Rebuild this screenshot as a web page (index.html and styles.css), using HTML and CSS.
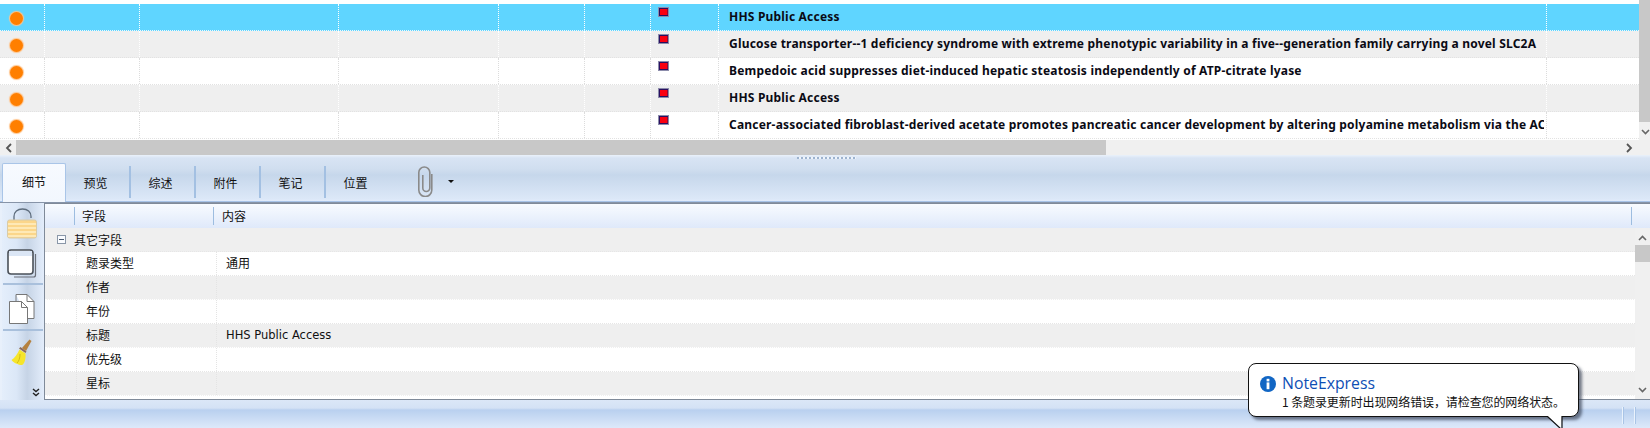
FILE: index.html
```html
<!DOCTYPE html>
<html lang="zh">
<head>
<meta charset="utf-8">
<title>NoteExpress</title>
<link rel="stylesheet" href="styles.css">
</head>
<body>
<svg class="defs" width="0" height="0">
  <defs>
    <symbol id="flag" viewBox="0 0 11 10">
      <rect x="0" y="0" width="11" height="10" fill="#8c8cab"/>
      <rect x="1" y="1" width="9" height="8" fill="#2a1060"/>
      <rect x="2" y="2" width="7.500" height="6" fill="#fa0010"/>
    </symbol>
  </defs>
</svg>
<div class="top">
  <div class="list">
    <div class="row selected"><div class="cell"><span class="dot"></span></div><div class="cell"></div><div class="cell"></div><div class="cell"></div><div class="cell"></div><div class="cell"></div><div class="cell"><svg class="flag"><use href="#flag"/></svg></div><div class="cell title"><div class="ttext">HHS Public Access</div></div><div class="cell"></div></div>
    <div class="row gray"><div class="cell"><span class="dot"></span></div><div class="cell"></div><div class="cell"></div><div class="cell"></div><div class="cell"></div><div class="cell"></div><div class="cell"><svg class="flag"><use href="#flag"/></svg></div><div class="cell title"><div class="ttext">Glucose transporter--1 deficiency syndrome with extreme phenotypic variability in a five--generation family carrying a novel SLC2A</div></div><div class="cell"></div></div>
    <div class="row"><div class="cell"><span class="dot"></span></div><div class="cell"></div><div class="cell"></div><div class="cell"></div><div class="cell"></div><div class="cell"></div><div class="cell"><svg class="flag"><use href="#flag"/></svg></div><div class="cell title"><div class="ttext">Bempedoic acid suppresses diet-induced hepatic steatosis independently of ATP-citrate lyase</div></div><div class="cell"></div></div>
    <div class="row gray"><div class="cell"><span class="dot"></span></div><div class="cell"></div><div class="cell"></div><div class="cell"></div><div class="cell"></div><div class="cell"></div><div class="cell"><svg class="flag"><use href="#flag"/></svg></div><div class="cell title"><div class="ttext">HHS Public Access</div></div><div class="cell"></div></div>
    <div class="row"><div class="cell"><span class="dot"></span></div><div class="cell"></div><div class="cell"></div><div class="cell"></div><div class="cell"></div><div class="cell"></div><div class="cell"><svg class="flag"><use href="#flag"/></svg></div><div class="cell title"><div class="ttext">Cancer-associated fibroblast-derived acetate promotes pancreatic cancer development by altering polyamine metabolism via the AC</div></div><div class="cell"></div></div>
  </div>
  <div class="vscroll">
    <div class="vthumb"></div>
    <div class="vtrack"><svg class="chev" width="9" height="6" viewBox="0 0 9 6"><path d="M1 1l3.500 3.500L8 1" fill="none" stroke="#666" stroke-width="1.600"/></svg></div>
  </div>
</div>
<div class="hscroll">
  <div class="harrow"><svg width="7" height="10" viewBox="0 0 7 10"><path d="M6 1L2 5l4 4" fill="none" stroke="#555" stroke-width="1.800"/></svg></div>
  <div class="hthumb"></div>
  <div class="htrack"><svg width="7" height="10" viewBox="0 0 7 10"><path d="M1 1l4 4-4 4" fill="none" stroke="#555" stroke-width="1.800"/></svg></div>
</div>
<div class="tabstrip">
  <div class="grip"></div>
  <div class="tabs">
    <div class="tab active">细节</div>
    <div class="tab">预览</div>
    <div class="tab">综述</div>
    <div class="tab">附件</div>
    <div class="tab">笔记</div>
    <div class="tab last">位置</div>
    <div class="clip">
      <svg width="16" height="31" viewBox="0 0 16 31"><path d="M14.800 8v16a6.500 6.500 0 0 1-13 0V6.500a5.500 5.500 0 0 1 11 0V22a3.500 3.500 0 0 1-7 0V9" fill="none" stroke="#8a8a8a" stroke-width="1.600"/></svg>
      <span class="caret"></span>
    </div>
  </div>
</div>
<div class="main">
  <div class="side">
    <svg class="lock" width="30" height="31" viewBox="0 0 30 31">
      <path d="M7 12V8.500C7 4 10.500 1 15.500 1S24 4 24 8.500V10" fill="none" stroke="#5d6c7c" stroke-width="1.300"/>
      <rect x="0.500" y="12" width="29" height="18" rx="2" fill="#fbd68a" stroke="#d8cba8"/>
      <path d="M1 16h28M1 20h28M1 24h28M1 28h28" stroke="#fee9b6" stroke-width="2"/>
    </svg>
    <svg class="win" width="30" height="29" viewBox="0 0 30 29">
      <path d="M28.500 5v21c0 1-.5 2-2 2H7" fill="none" stroke="#6a6f78" stroke-width="1.200"/>
      <rect x="1" y="1" width="25" height="24" rx="3" fill="#fff" stroke="#4a5058" stroke-width="1.600"/>
      <rect x="2" y="2" width="23" height="5" fill="#dbe6f5"/>
    </svg>
    <div class="sep"></div>
    <svg class="pages" width="27" height="30" viewBox="0 0 27 30">
      <path d="M7 .5h11l7 7v17h-6" fill="#fff" stroke="#777"/>
      <path d="M18 .5v7h7" fill="none" stroke="#777"/>
      <path d="M7 .5v7" fill="none" stroke="#777"/>
      <path d="M.5 7.500h12l6 6v16H.5z" fill="#fff" stroke="#777"/>
      <path d="M12.500 7.500v6h6" fill="none" stroke="#777"/>
    </svg>
    <div class="sep"></div>
    <svg class="broom" width="21" height="27" viewBox="0 0 21 27">
      <path d="M18.500 .5l2 1.500L15 12l-4-3z" fill="#b5813f"/>
      <path d="M9.500 8l6 4.500-1 1.500-6.500-4.500z" fill="#8e6a5a"/>
      <path d="M8.500 10.500l6 4c.5 4-.5 9-2.500 11-2 1-4 .5-5.500-.5-2-.5-5-2.500-6-4 3-2 6-6 8-10.500z" fill="#f6e52a"/>
      <path d="M9 15c0 4-1 7-3 9" fill="none" stroke="#d2bc14" stroke-width="1"/>
    </svg>
    <svg class="more" width="8" height="9" viewBox="0 0 8 9"><path d="M1 1l3 2.500L7 1M1 5l3 2.500L7 5" fill="none" stroke="#222" stroke-width="1.400"/></svg>
  </div>
  <div class="panel">
    <div class="head">
      <div class="hcell first"></div>
      <div class="hcell second">字段</div>
      <div class="hcell third">内容</div>
    </div>
    <div class="body">
      <div class="rows">
        <div class="frow gray group"><span class="minus"></span>其它字段</div>
        <div class="frow"><div class="fgut"></div><div class="fname">题录类型</div><div class="fval">通用</div></div>
        <div class="frow gray"><div class="fgut"></div><div class="fname">作者</div><div class="fval"></div></div>
        <div class="frow"><div class="fgut"></div><div class="fname">年份</div><div class="fval"></div></div>
        <div class="frow gray"><div class="fgut"></div><div class="fname">标题</div><div class="fval latin">HHS Public Access</div></div>
        <div class="frow"><div class="fgut"></div><div class="fname">优先级</div><div class="fval"></div></div>
        <div class="frow gray"><div class="fgut"></div><div class="fname">星标</div><div class="fval"></div></div>
      </div>
      <div class="pscroll">
        <svg width="9" height="6" viewBox="0 0 9 6"><path d="M1 5l3.500-3.500L8 5" fill="none" stroke="#666" stroke-width="1.600"/></svg>
        <div class="pthumb"></div>
        <svg class="pdown" width="9" height="6" viewBox="0 0 9 6"><path d="M1 1l3.500 3.500L8 1" fill="none" stroke="#666" stroke-width="1.600"/></svg>
      </div>
    </div>
  </div>
</div>
<div class="status">
  <span class="grip2"></span><span class="grip2"></span>
</div>
<div class="balloon">
  <div class="btitle">
    <svg width="16" height="16" viewBox="0 0 16 16"><circle cx="8" cy="8" r="8" fill="#1166c4"/><rect x="6.600" y="2.800" width="2.800" height="2.600" fill="#fff"/><rect x="6.600" y="6.400" width="2.800" height="6.800" fill="#fff"/></svg>
    <span>NoteExpress</span>
  </div>
  <div class="bmsg">1 条题录更新时出现网络错误，请检查您的网络状态。</div>
  <svg class="tail" width="20" height="13" viewBox="0 0 20 13"><path d="M2 0L16 12 17 0" fill="#fff"/><path d="M2 0l14 13M17 0v13" fill="none" stroke="#111" stroke-width="1.200"/></svg>
</div>
</body>
</html>
```
FILE: styles.css
```css
* { box-sizing: border-box; }
html, body { margin: 0; padding: 0; }
body {
  width: 1650px;
  height: 428px;
  overflow: hidden;
  position: relative;
  background: #fff;
  font-family: "Noto Sans CJK SC", "Liberation Sans", sans-serif;
  font-size: 12px;
  color: #111;
  display: flex;
  flex-direction: column;
}
.defs { position: absolute; }

/* upper list */
.top { height: 140px; display: flex; flex: none; }
.list { width: 1639px; padding-top: 4px; }
.row {
  height: 27px;
  display: grid;
  grid-template-columns: 45px 95px 199px 160px 86px 66px 68px 828px 92px;
  border-bottom: 1px dotted #e2e2e2;
}
.row.gray { background: #efefef; }
.row.selected { background: #5fd5ff; border-bottom-color: #e8f8ff; }
.cell { border-right: 1px dotted #dcdcdc; position: relative; min-width: 0; }
.row.gray .cell { border-right-color: #fff; }
.row.selected .cell { border-right-color: #fff; }
.cell:last-child { border-right: 0; }
.dot {
  display: block;
  width: 13px;
  height: 13px;
  margin: 8px 0 0 10px;
  border-radius: 50%;
  background: #ff7f00;
  box-shadow: 0 0 1px 1px #ffc38a;
}
.flag { display: block; width: 11px; height: 10px; margin: 3px 0 0 7px; }
.title {
  padding: 0 2px 0 10px;
  font-family: "Noto Sans", sans-serif;
  font-weight: 700;
  font-size: 12px;
  letter-spacing: .2px;
  line-height: 25px;
  color: #0a0a14;
}
.ttext { white-space: nowrap; overflow: hidden; }
.vscroll { width: 11px; display: flex; flex-direction: column; }
.vthumb { height: 122px; background: #c8c8c8; }
.vtrack { flex: 1; background: #f0f0f0; padding: 7px 0 0 2px; }
.chev { display: block; }

.hscroll { height: 15px; flex: none; display: flex; background: #f0f0f0; }
.harrow { width: 16px; display: flex; align-items: center; justify-content: center; }
.hthumb { width: 1090px; background: #c8c8c8; }
.htrack { flex: 1; display: flex; align-items: center; justify-content: flex-end; padding-right: 17px; }

/* tab strip */
.tabstrip {
  height: 48px;
  flex: none;
  position: relative;
  background: linear-gradient(#eaf1fa 0, #d8e4f4 3px, #d0deef 14px, #c6d7eb 20px, #dce8f8 44px, #e2ecfb 46px, #a8c4e8 46px, #a8c4e8 47px, #8794a8 47px);
}
.grip {
  position: absolute;
  left: 797px;
  top: 2px;
  width: 59px;
  height: 2px;
  background: repeating-linear-gradient(90deg, #9db3cf 0 2px, #eef4fb 2px 4px);
}
.tabs { display: flex; padding: 8px 0 0 2px; height: 47px; }
.tab {
  width: 65px;
  height: 32px;
  margin-top: 3px;
  padding: 0 4px 0 0;
  border-right: 2px solid #a3c0e2;
  text-align: center;
  line-height: 34px;
  color: #111;
  flex: none;
}
.tab.last { border-right: 0; padding-right: 6px; }
.tab.active {
  width: 64px;
  height: 39px;
  margin-top: 0;
  padding: 0;
  line-height: 36px;
  background: linear-gradient(#f7faff, #f2f7fe);
  border: 1px solid #a9c5e8;
  border-bottom: 0;
  border-radius: 2px 2px 0 0;
}
.clip { display: flex; align-items: flex-start; margin-left: 26px; }
.clip svg { display: block; margin-top: 3px; }
.caret {
  width: 0;
  height: 0;
  margin: 17px 0 0 15px;
  border: 3px solid transparent;
  border-top: 3px solid #111;
  border-bottom: 0;
}

/* main */
.main { height: 197px; flex: none; display: flex; }
.side {
  width: 44px;
  flex: none;
  padding: 5px 0 0 2px;
  display: flex;
  flex-direction: column;
  position: relative;
  background: linear-gradient(90deg, #e4eefb 0, #dbe7f7 35%, #c6d4e6 60%, #e3edfb 100%);
  border-left: 2px solid #e8f0fb;
}
.side svg { display: block; flex: none; }
.lock { margin-left: 3px; }
.win { margin: 10px 0 0 3px; }
.sep { height: 2px; margin: 5px 0 0 -1px; width: 40px; background: #a9c0dc; flex: none; }
.pages { margin: 9px 0 0 5px; }
.sep + .broom { margin: 8px 0 0 7px; }
.more { position: absolute; left: 30px; top: 185px; }
.panel {
  flex: 1;
  min-width: 0;
  border: 1px solid #7f8a99;
  border-width: 1px 0 1px 1px;
  display: flex;
  flex-direction: column;
  background: #fff;
}
.head {
  height: 24px;
  flex: none;
  display: flex;
  padding-top: 3px;
  background: linear-gradient(#f8fbff, #dfe9fa);
  line-height: 21px;
}
.hcell { height: 18px; border-right: 1px solid #9dbde0; flex: none; line-height: 18px; }
.first { width: 30px; }
.second { width: 139px; padding-left: 7px; }
.third { flex: 1; padding-left: 8px; margin-right: 18px; }
.body { flex: 1; display: flex; min-height: 0; }
.rows { flex: 1; min-width: 0; overflow: hidden; }
.frow {
  height: 24px;
  display: flex;
  border-bottom: 1px dotted #e6e6e6;
  line-height: 22px;
}
.frow.gray { background: #efefef; border-bottom-color: #fff; }
.frow.group { align-items: center; padding-left: 12px; border-bottom-color: #e6e6e6; }
.minus {
  width: 9px;
  height: 9px;
  margin-right: 8px;
  margin-top: -1px;
  border: 1px solid #8a97a8;
  background: linear-gradient(90deg, transparent 1px, #4a5a70 1px, #4a5a70 6px, transparent 6px) center / 100% 1px no-repeat #fafcff;
}
.fgut { width: 32px; flex: none; border-right: 1px dotted #e4e4e4; }
.fname { width: 140px; flex: none; padding-left: 9px; border-right: 1px dotted #e4e4e4; }
.fval { flex: 1; padding-left: 9px; }
.latin { font-family: "DejaVu Sans", sans-serif; font-size: 11.500px; }
.pscroll {
  width: 15px;
  flex: none;
  background: #f0f0f0;
  display: flex;
  flex-direction: column;
  align-items: center;
  padding-top: 7px;
}
.pthumb { width: 15px; height: 17px; margin-top: 4px; background: #c8c8c8; }
.pdown { margin-top: auto; margin-bottom: 6px; }

/* status */
.status {
  flex: 1;
  display: flex;
  justify-content: flex-end;
  gap: 11px;
  padding: 7px 15px 0 0;
  background: linear-gradient(#dbe7f7 0, #d4e2f5 8px, #b9d0ef 10px, #dde9fa 100%);
}
.grip2 { width: 1px; height: 17px; background: #eaf2fc; box-shadow: 1px 0 0 #a9c4e6; }

/* balloon */
.balloon {
  position: absolute;
  left: 1248px;
  top: 363px;
  width: 331px;
  height: 54px;
  padding: 11px 0 0 11px;
  background: #fff;
  border: 1px solid #111;
  border-radius: 8px;
  box-shadow: 3px 3px 3px rgba(50, 60, 80, .65);
}
.btitle { display: flex; align-items: center; gap: 6px; height: 17px; }
.btitle svg { display: block; flex: none; }
.btitle span { font-family: "Open Sans", sans-serif; font-size: 15.800px; color: #0e4fb5; line-height: 17px; }
.bmsg { padding-left: 22px; font-size: 12px; line-height: 16px; margin-top: 2px; white-space: nowrap; letter-spacing: -.1px; }
.tail { position: absolute; left: 296px; top: 52px; }
```
